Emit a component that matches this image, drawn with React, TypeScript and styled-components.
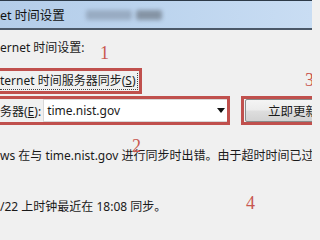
import React from 'react';
import styled, {createGlobalStyle} from 'styled-components';

const Global = createGlobalStyle`
  html, body {
    margin: 0;
    padding: 0;
    background: #f0f0f0;
    overflow: hidden;
  }
  body {
    font-family: "Noto Sans", "Noto Sans CJK SC", sans-serif;
    font-size: 12px;
    color: #1a1a1a;
  }
`;

const Page = styled.div`
  position: relative;
  width: 312px;
  height: 234px;
  overflow: hidden;
`;

const TitleBar = styled.div`
  height: 27px;
  border-top: 1px solid #2d3a48;
  border-bottom: 2px solid #4b5868;
  background: linear-gradient(90deg, #b4cde9 0%, #bcd4ee 50%, #c9ddf3 100%);
  display: flex;
  align-items: center;
  white-space: nowrap;
  > .title {
    font-size: 12.5px;
    color: #111;
  }
`;

const Blurred = styled.span<{$dark?: boolean}>`
  display: inline-block;
  height: 10px;
  border-radius: 2px;
  filter: blur(2px);
  background: ${p => (p.$dark ? '#7f8d9d' : '#8a9bb0')};
  width: ${p => (p.$dark ? '26px' : '46px')};
  margin-left: ${p => (p.$dark ? '4px' : '21px')};
  opacity: ${p => (p.$dark ? 0.9 : 0.7)};
`;

const Content = styled.div`
  display: flex;
  flex-direction: column;
  padding-top: 10px;
`;

const Line = styled.div<{$gap?: number}>`
  line-height: 16px;
  height: 16px;
  white-space: nowrap;
  margin-top: ${p => p.$gap ?? 0}px;
`;

const RedFrame = styled.div`
  border: 3px solid #c0504d;
  box-sizing: border-box;
  display: flex;
  align-items: center;
`;

const CheckFrame = styled(RedFrame)`
  margin-top: 12px;
  margin-left: -6px;
  padding-left: 3px;
  padding-right: 1px;
  height: 26px;
  width: fit-content;
`;

const Focus = styled.span`
  border-right: 1px dotted #444;
  border-bottom: 1px dotted #444;
  line-height: 16px;
  padding-right: 1px;
  white-space: nowrap;
`;

const Row = styled.div`
  display: flex;
  margin-top: 2px;
  height: 29px;
`;

const ComboFrame = styled(RedFrame)`
  margin-left: -6px;
  padding-left: 3px;
  width: 236px;
  flex-shrink: 0;
  > .label {
    flex: none;
    margin-right: 2px;
    white-space: nowrap;
  }
`;

const Combo = styled.div`
  flex: 1;
  height: 23px;
  background: #fff;
  border: 1px solid #d8d8d8;
  border-right: none;
  box-sizing: border-box;
  display: flex;
  align-items: center;
  padding-left: 3px;
  > .value {
    flex: 1;
  }
`;

const Arrow = styled.span`
  width: 0;
  height: 0;
  border-left: 4px solid transparent;
  border-right: 4px solid transparent;
  border-top: 5px solid #111;
  margin-right: 2px;
`;

const ButtonFrame = styled(RedFrame)`
  margin-left: 11px;
  padding: 0 0 0 1px;
  width: 110px;
  flex-shrink: 0;
`;

const Button = styled.div`
  height: 23px;
  flex: 1;
  box-sizing: border-box;
  border: 1px solid #8a8a8a;
  border-radius: 2px;
  background: linear-gradient(#f4f4f4 0%, #ececec 45%, #dddddd 55%, #d2d2d2 100%);
  display: flex;
  align-items: center;
  padding-left: 22px;
  white-space: nowrap;
  font-size: 12.5px;
`;

const Num = styled.span<{$x: number; $y: number}>`
  position: absolute;
  left: ${p => p.$x}px;
  top: ${p => p.$y}px;
  font-family: "Liberation Serif", serif;
  font-size: 18px;
  line-height: 18px;
  color: #c8574f;
`;

export default function App() {
  return (
    <Page>
      <Global />
      <TitleBar>
        <span className="title">et 时间设置</span>
        <Blurred />
        <Blurred $dark />
      </TitleBar>
      <Content>
        <Line>ernet 时间设置:</Line>
        <CheckFrame>
          <Focus>ternet 时间服务器同步(<u>S</u>)</Focus>
        </CheckFrame>
        <Row>
          <ComboFrame>
            <span className="label">务器(<u>E</u>):</span>
            <Combo>
              <span className="value">time.nist.gov</span>
              <Arrow />
            </Combo>
          </ComboFrame>
          <ButtonFrame>
            <Button>立即更新</Button>
          </ButtonFrame>
        </Row>
        <Line $gap={23}>ws 在与 time.nist.gov 进行同步时出错。由于超时时间已过</Line>
        <Line $gap={35}>/22 上时钟最近在 18:08 同步。</Line>
      </Content>
      <Num $x={100} $y={44}>1</Num>
      <Num $x={132} $y={137}>2</Num>
      <Num $x={305} $y={71}>3</Num>
      <Num $x={246} $y={194}>4</Num>
    </Page>
  );
}
